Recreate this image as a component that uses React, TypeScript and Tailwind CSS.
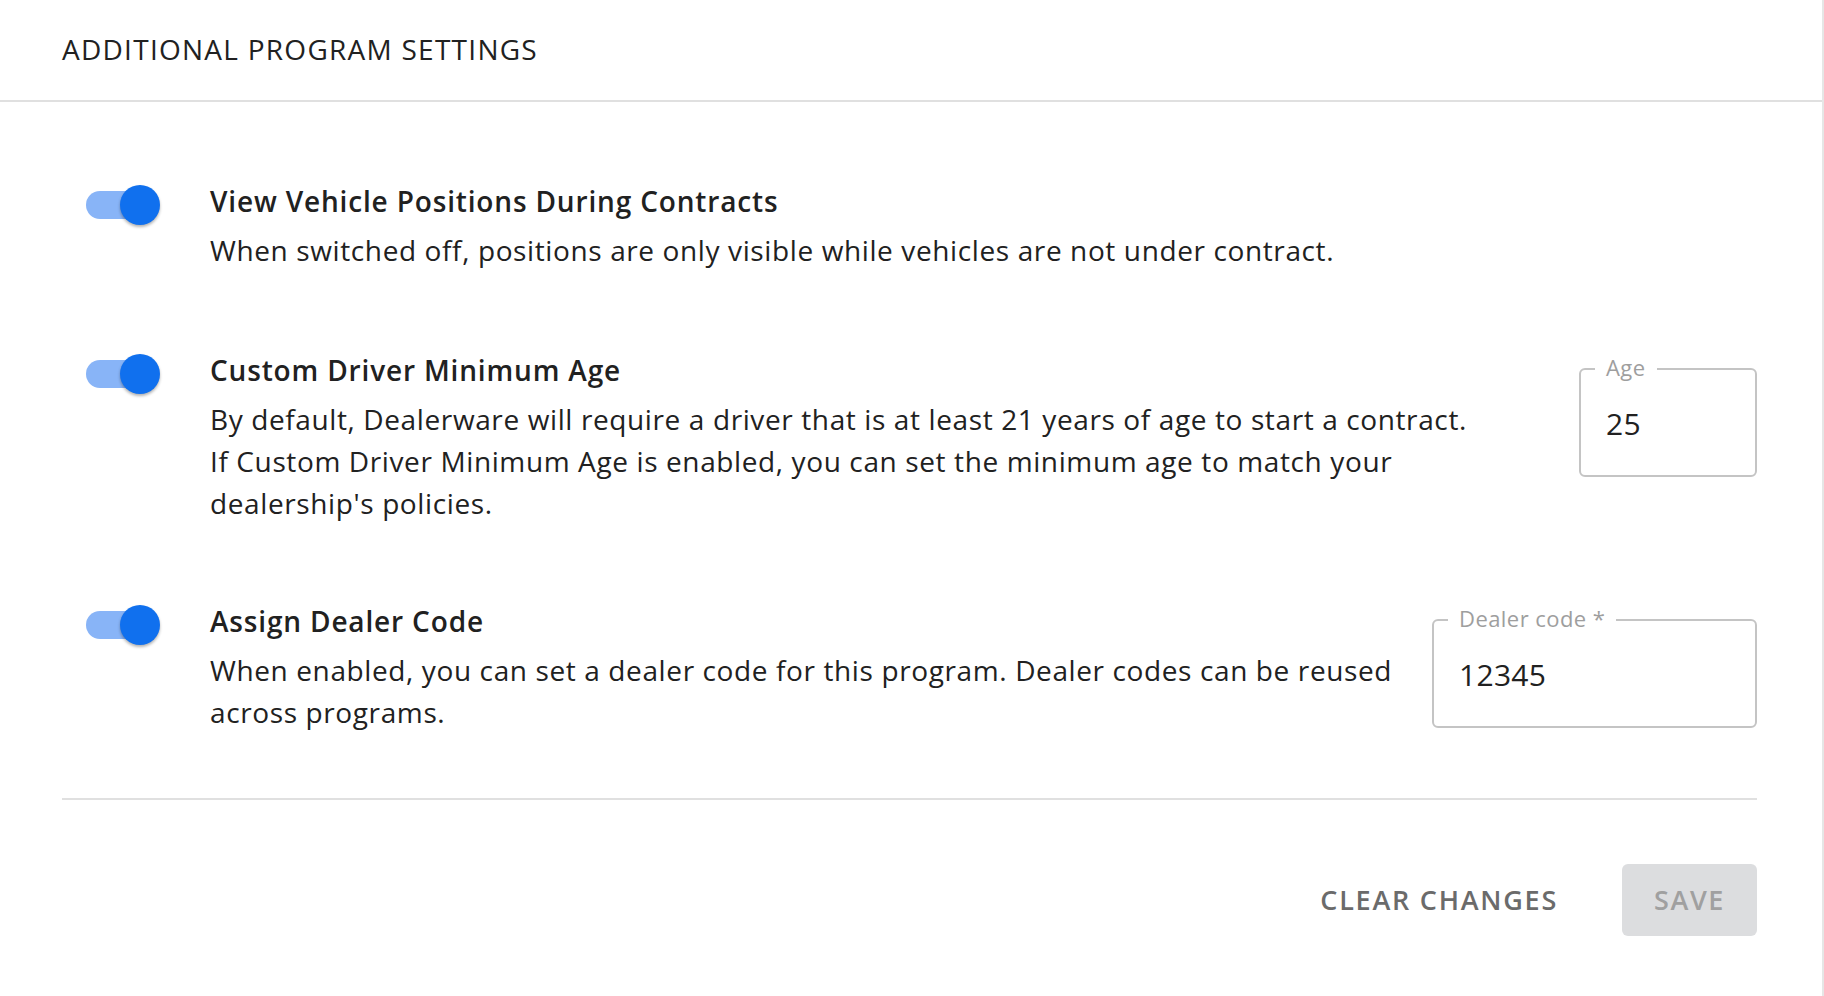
import React from "react";

function Toggle() {
  return (
    <div className="relative w-[74px] h-[40px] shrink-0">
      <div className="absolute left-0 top-[6px] w-[68px] h-[28px] rounded-full bg-[#88b4f7]" />
      <div className="absolute left-[34px] top-0 w-[40px] h-[40px] rounded-full bg-[#1070ee] shadow-[0_2px_3px_rgba(0,0,0,0.3)]" />
    </div>
  );
}

function Field({ label, value, width }: { label: string; value: string; width: string }) {
  return (
    <div className={`relative ${width} h-[108px] shrink-0`}>
      <fieldset className="absolute inset-0 border-2 border-[#c4c4c4] rounded-[6px] px-[14px] m-0 -top-[11px]">
        <legend className="px-[11px] text-[22px] leading-[22px] text-[#9e9e9e] tracking-[0.02em]">
          <span className="relative -top-[2px]">{label}</span>
        </legend>
      </fieldset>
      <div className="absolute left-[27px] top-[35px] text-[30px] leading-[40px] text-[#212121] tracking-[0.01em]">{value}</div>
    </div>
  );
}

export default function App() {
  return (
    <div
      className="w-[1824px] h-[996px] bg-white border-r-2 border-[#e6e6e6] text-[#212121]"
      style={{ fontFamily: '"Open Sans", "Noto Sans", sans-serif' }}
    >
      <div className="h-[102px] border-b-2 border-[#e0e0e0] pl-[62px] flex items-center">
        <h1 className="text-[28px] font-medium tracking-[0.045em] text-[#212121] -mt-[2px]">
          ADDITIONAL PROGRAM SETTINGS
        </h1>
      </div>

      <div className="pl-[62px] pr-[65px]">
        <div className="pl-[24px] pt-[81px] flex flex-col">
          {/* Row 1 */}
          <div className="flex">
            <div className="pt-[2px]"><Toggle /></div>
            <div className="ml-[50px] flex-1">
              <div className="text-[28px] font-semibold leading-[36px] tracking-[0.03em]">
                View Vehicle Positions During Contracts
              </div>
              <div className="mt-[10px] text-[28px] leading-[42px] tracking-[0.022em]">
                When switched off, positions are only visible while vehicles are not under contract.
              </div>
            </div>
          </div>

          {/* Row 2 */}
          <div className="flex mt-[81px]">
            <div className="pt-[2px]"><Toggle /></div>
            <div className="ml-[50px] flex-1">
              <div className="text-[28px] font-semibold leading-[36px] tracking-[0.03em]">
                Custom Driver Minimum Age
              </div>
              <div className="mt-[10px] text-[28px] leading-[42px] tracking-[0.022em]">
                By default, Dealerware will require a driver that is at least 21 years of age to start a contract.
                <br />
                If Custom Driver Minimum Age is enabled, you can set the minimum age to match your
                <br />
                dealership's policies.
              </div>
            </div>
            <div className="pt-[17px]">
              <Field label="Age" value="25" width="w-[178px]" />
            </div>
          </div>

          {/* Row 3 */}
          <div className="flex mt-[79px]">
            <div className="pt-[2px]"><Toggle /></div>
            <div className="ml-[50px] flex-1">
              <div className="text-[28px] font-semibold leading-[36px] tracking-[0.03em]">
                Assign Dealer Code
              </div>
              <div className="mt-[10px] text-[28px] leading-[42px] tracking-[0.022em]">
                When enabled, you can set a dealer code for this program. Dealer codes can be reused
                <br />
                across programs.
              </div>
            </div>
            <div className="pt-[17px]">
              <Field label="Dealer code *" value="12345" width="w-[325px]" />
            </div>
          </div>
        </div>

        <div className="mt-[65px] border-t-2 border-[#e0e0e0]" />

        <div className="flex justify-end items-center pt-[64px] gap-[40px]">
          <button className="h-[72px] px-[24px] text-[27px] font-semibold tracking-[0.065em] text-[#6b6b6b]">
            CLEAR CHANGES
          </button>
          <button className="h-[72px] w-[135px] rounded-[6px] bg-[#dcdddf] text-[27px] font-semibold tracking-[0.06em] text-[#a0a0a0]">
            SAVE
          </button>
        </div>
      </div>
    </div>
  );
}
